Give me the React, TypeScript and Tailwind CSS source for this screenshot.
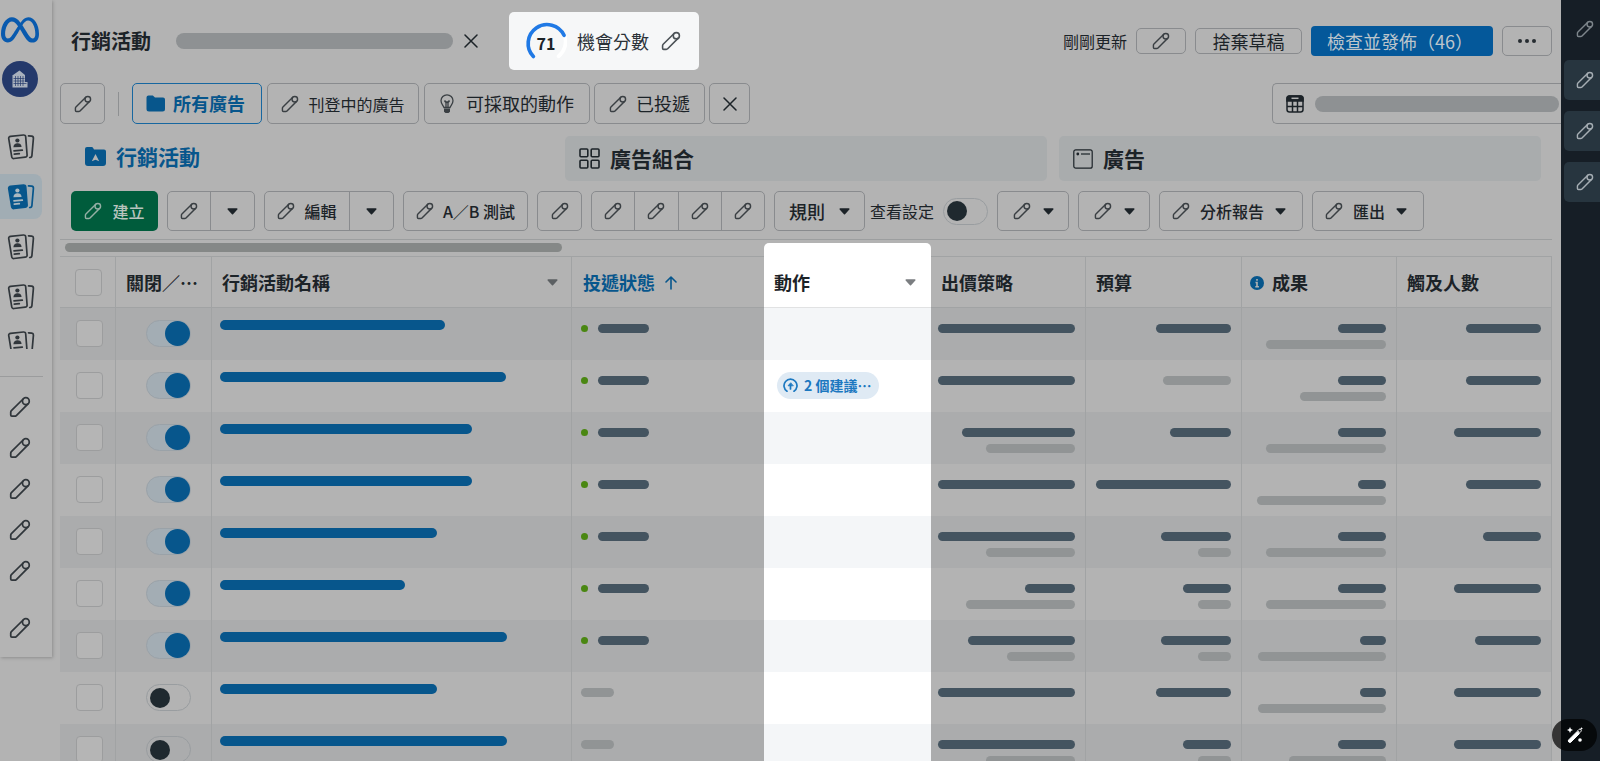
import { useState } from 'react';
import type { ReactNode } from 'react';
import clsx from 'clsx';
import { FaMeta } from 'react-icons/fa6';

type Row = {
    on: boolean;
    name: number;
    status: boolean;
    suggestions?: string;
    bid: number[];
    budget: number[];
    result: number[];
    reach: number[];
};

// Bar widths: [main, secondary]. 0 means that the main bar is missing.
const rows: Row[] = [
    { on: true, name: 225, status: true, bid: [137], budget: [75], result: [48, 120], reach: [75] },
    { on: true, name: 286, status: true, suggestions: '2 個建議⋯', bid: [137], budget: [0, 68], result: [48, 86], reach: [75] },
    { on: true, name: 252, status: true, bid: [113, 89], budget: [61], result: [48, 120], reach: [87] },
    { on: true, name: 252, status: true, bid: [137], budget: [135], result: [28, 129], reach: [75] },
    { on: true, name: 217, status: true, bid: [137, 89], budget: [70, 33], result: [48, 120], reach: [58] },
    { on: true, name: 185, status: true, bid: [50, 109], budget: [48, 33], result: [48, 120], reach: [87] },
    { on: true, name: 287, status: true, bid: [107, 68], budget: [70, 33], result: [26, 128], reach: [66] },
    { on: false, name: 217, status: false, bid: [137], budget: [75], result: [26, 128], reach: [87] },
    { on: false, name: 287, status: false, bid: [137, 89], budget: [48, 33], result: [48, 97], reach: [87] },
];

function Pencil({ className = 'size-[18px] opacity-80' }: { className?: string }) {
    return (
        <svg viewBox="0 0 24 24" fill="none" stroke="currentColor" strokeWidth="1.900" strokeLinejoin="round" className={clsx('shrink-0', className)} aria-hidden="true">
            <path d="M15.700 3L2.600 15.900a2.400 2.400 0 0 0-.7 1.700v3.100a1.300 1.300 0 0 0 1.300 1.300h3.100a2.400 2.400 0 0 0 1.700-.7L21 8.300" />
            <circle cx="18.400" cy="5.600" r="3.700" />
        </svg>
    );
}

function Caret({ className }: { className?: string }) {
    return (
        <svg viewBox="0 0 11 7" className={clsx('h-[7px] w-[11px] shrink-0', className)} aria-hidden="true">
            <path d="M1.200 1h8.600L5.500 5.800z" fill="currentColor" stroke="currentColor" strokeWidth="1.500" strokeLinejoin="round" />
        </svg>
    );
}

function Close() {
    return (
        <svg viewBox="0 0 14 14" className="size-[14px]" fill="none" stroke="currentColor" strokeWidth="1.500" strokeLinecap="round" aria-hidden="true">
            <path d="M1 1l12 12M13 1L1 13" />
        </svg>
    );
}

function Cards({ active, cut }: { active?: boolean; cut?: boolean }) {
    return (
        <svg viewBox={cut ? '0 0 28 18' : '0 0 28 26'} className={cut ? 'h-[18px] w-7' : 'h-[26px] w-7'} fill="none" stroke="currentColor" strokeWidth="1.700" aria-hidden="true">
            <path d="M3.500 2.300l13-1.300a2 2 0 0 1 2.200 1.800l1.400 18.200a2 2 0 0 1-1.900 2.200l-11.200 1.300a2 2 0 0 1-2.300-1.800L1.700 4.500a2 2 0 0 1 1.800-2.200z" fill={active ? 'currentColor' : 'none'} />
            <path d="M21.500 1.800l3.200.4a2 2 0 0 1 1.700 2.200l-1.500 17.200a2.200 2.200 0 0 1-2.200 1.900" strokeLinecap="round" />
            <g className={active ? 'fill-[#aab8c0] stroke-[#aab8c0]' : 'fill-current stroke-current'}>
                <circle cx="10.400" cy="6.500" r="2.100" stroke="none" />
                <path d="M6.400 13.300c0-3 1.900-4 4-4.100s4 .9 4.200 3.800z" stroke="none" />
                <path d="M7 16.900l8.300-.7M7.300 20.100l5-.4" strokeLinecap="round" />
            </g>
        </svg>
    );
}

function Building() {
    return (
        <svg viewBox="0 0 16 18" className="h-[18px] w-4" fill="#a9b1bd" aria-hidden="true">
            <path d="M1 5l6.500-4.500L13 5v7h2.500v5.500H.5V5z" />
            <path d="M3.500 6v10M6 6v10M8.500 6v10M11 6v10M1.500 8.500h11M1.500 11h11M1.500 13.500h13" stroke="#24396b" strokeWidth=".7" />
        </svg>
    );
}

function Button({ children, className, label }: { children: ReactNode; className?: string; label?: string }) {
    return (
        <button type="button" aria-label={label} className={clsx('flex shrink-0 items-center rounded-[5px] border whitespace-nowrap', className)}>
            {children}
        </button>
    );
}

function Toggle({ checked, label }: { checked: boolean; label: string }) {
    const [on, setOn] = useState(checked);
    return (
        <input
            type="checkbox"
            role="switch"
            aria-label={label}
            checked={on}
            onChange={() => setOn(!on)}
            className="flex h-[27px] w-[45px] shrink-0 appearance-none items-center rounded-full border border-[#999da0] px-[3px] before:size-5 before:rounded-full before:bg-[#1f292f] checked:justify-end checked:border-[#9aa2a8] checked:bg-[#a3adb4] checked:px-0 checked:before:size-[25px] checked:before:bg-[#07568c]"
        />
    );
}

function Check({ label }: { label: string }) {
    return <input type="checkbox" aria-label={label} className="block size-[27px] appearance-none rounded border border-[#9c9d9e] bg-[#b5b5b5]" />;
}

function Bars({ widths }: { widths: number[] }) {
    return (
        <div className="flex flex-col items-end gap-[7px] pt-4 pr-[10px]">
            {widths.map((width, i) =>
                width > 0 ? <span key={i} className={clsx('h-[9px] rounded-full', i === 0 ? 'bg-[#445460]' : 'bg-[#919495]')} style={{ width }} /> : null
            )}
        </div>
    );
}

function Sidebar() {
    return (
        <nav aria-label="工具" className="flex w-[52px] shrink-0 flex-col self-start bg-[#b4b4b4] pb-[18px] shadow-[1px_1px_3px_#8e8e8e]">
            <a href="#home" aria-label="Meta" className="mt-[11px] ml-px w-fit text-[#095aae]">
                <FaMeta className="size-[38px]" />
            </a>
            <a href="#business" aria-label="商家" className="mt-3 ml-[2px] flex size-9 items-center justify-center rounded-full bg-[#24396b]">
                <Building />
            </a>
            <div className="mt-[27px] flex flex-col text-[#30363b]">
                {[0, 1, 2, 3, 4].map((i) => (
                    <a
                        key={i}
                        href="#campaigns"
                        aria-label="廣告活動"
                        className={clsx('flex w-[42px] justify-center rounded-r-lg', i === 4 ? 'mt-3 h-[18px]' : 'h-[45px] items-center', i > 0 && i < 4 && 'mt-[5px]', i === 1 && 'bg-[#a1adb4] text-[#07568c]')}
                    >
                        <Cards active={i === 1} cut={i === 4} />
                    </a>
                ))}
            </div>
            <hr className="mt-[27px] w-[43px] border-[#9b9c9d]" />
            <div className="mt-[19px] flex flex-col gap-[19px] pl-[9px] text-[#30363b]">
                {[0, 1, 2, 3, 4].map((i) => (
                    <a key={i} href="#tool" aria-label="編輯工具">
                        <Pencil className="size-[22px]" />
                    </a>
                ))}
                <a href="#more" aria-label="更多工具" className="mt-4">
                    <Pencil className="size-[22px]" />
                </a>
            </div>
        </nav>
    );
}

function Header() {
    return (
        <header className="flex items-center pt-3 pr-[9px] pl-[19px]">
            <h1 className="text-[20px] leading-7 font-bold">行銷活動</h1>
            <span className="ml-[25px] h-4 w-[277px] rounded-full bg-[#8e9193]" />
            <button type="button" aria-label="關閉" className="ml-[11px]">
                <Close />
            </button>
            <div className="ml-[31px] flex h-[58px] w-[190px] items-center rounded-[5px] bg-[#f6f7f8] pl-4">
                <div className="relative flex size-[42px] items-center justify-center text-[16px] font-bold">
                    <svg viewBox="0 0 40 40" className="absolute inset-0 size-[42px]" fill="none" strokeWidth="3.500" strokeLinecap="round" aria-hidden="true">
                        <path d="M37.900 15.500A18 18 0 0 1 32 34.500" stroke="#fff" />
                        <path d="M8 34.800A18 18 0 1 1 37.200 14.500" stroke="#2079e5" />
                    </svg>
                    <span className="pt-1">71</span>
                </div>
                <span className="ml-[10px] text-[18px] text-[#2b3238]">機會分數</span>
                <Pencil className="ml-3 size-5 text-[#4b5156]" />
            </div>
            <div className="ml-auto flex items-center gap-[9px]">
                <span className="text-[16px]">剛剛更新</span>
                <Button className="h-[26px] w-[50px] justify-center border-[#898b8e]" label="編輯">
                    <Pencil />
                </Button>
                <Button className="h-[26px] w-[107px] justify-center border-[#898b8e] text-[18px]">捨棄草稿</Button>
                <button type="button" className="flex h-[30px] w-[182px] items-center rounded bg-[#04589a] pl-4 text-[18px] whitespace-nowrap text-[#bcc5cc]">
                    檢查並發佈（46）
                </button>
                <Button className="h-[30px] w-[50px] justify-center gap-[3px] border-[#898b8e]" label="更多">
                    <i className="size-1 rounded-full bg-[#262c31]" />
                    <i className="size-1 rounded-full bg-[#262c31]" />
                    <i className="size-1 rounded-full bg-[#262c31]" />
                </Button>
            </div>
        </header>
    );
}

function Filters() {
    return (
        <div className="mt-[13px] flex h-[41px] items-stretch pl-2">
            <Button className="w-[45px] justify-center border-[#898b8e]" label="編輯篩選條件">
                <Pencil />
            </Button>
            <span className="mx-[13px] w-px self-center bg-[#8e9092] py-3" />
            <Button className="w-[130px] gap-[7px] border-[#1767a0] pl-[13px] text-[18px] font-bold text-[#07568c]">
                <svg viewBox="0 0 20 17" className="h-[17px] w-5" fill="currentColor" aria-hidden="true">
                    <path d="M.5 2.500A2 2 0 0 1 2.500.5h4.300l2.200 2H17a2 2 0 0 1 2 2V14a2.500 2.500 0 0 1-2.500 2.500H3A2.500 2.500 0 0 1 .5 14z" />
                </svg>
                所有廣告
            </Button>
            <Button className="ml-[5px] w-[152px] justify-center gap-[9px] border-[#898b8e] text-[16px]">
                <Pencil />
                刊登中的廣告
            </Button>
            <Button className="ml-[5px] w-[166px] justify-center gap-3 border-[#898b8e] text-[18px]">
                <svg viewBox="0 0 14 20" className="h-5 w-3.5 opacity-80" fill="none" stroke="currentColor" strokeWidth="1.300" aria-hidden="true">
                    <path d="M4 13.500C3.500 11.500 1 10 1 6.800a6 6 0 0 1 12 0c0 3.200-2.500 4.700-3 6.700zM4.500 7l1.500 1.500v5M9.500 7L8 8.500v5M4.500 6.500l2.500 2 2.500-2" />
                    <path d="M4 14.500h6v3.200L8.500 19h-3L4 17.700z" fill="currentColor" stroke="none" />
                </svg>
                可採取的動作
            </Button>
            <Button className="ml-1 w-[111px] justify-center gap-[9px] border-[#898b8e] text-[18px]">
                <Pencil />
                已投遞
            </Button>
            <Button className="ml-1 w-[41px] justify-center border-[#898b8e]" label="清除篩選條件">
                <Close />
            </Button>
            <button type="button" aria-label="日期範圍" className="ml-auto flex w-[289px] items-center rounded-l-[5px] border border-r-0 border-[#898b8e] pl-[13px]">
                <svg viewBox="0 0 18 18" className="size-[18px]" fill="none" stroke="currentColor" strokeWidth="1.500" aria-hidden="true">
                    <rect x="1" y="1" width="16" height="16" rx="2.500" />
                    <path d="M1 3.500A2.500 2.500 0 0 1 3.500 1h11A2.500 2.500 0 0 1 17 3.500V6H1z" fill="currentColor" />
                    <path d="M1 11.500h16M6.500 6v11M11.500 6v11" />
                    <path d="M5.500 3.300h7" stroke="#b3b3b3" />
                </svg>
                <span className="ml-[11px] h-4 w-[244px] rounded-full bg-[#8e9193]" />
            </button>
        </div>
    );
}

function Tabs() {
    const tab = 'flex h-[45px] items-center gap-[10px] rounded-[5px] pl-3.5 text-[21px] font-bold';
    return (
        <div role="tablist" className="mt-3 mr-5 ml-[19px] grid grid-cols-3 gap-3">
            <button type="button" role="tab" aria-selected="true" className={clsx(tab, 'pb-1 text-[#07568c]')}>
                <svg viewBox="0 0 21 19" className="h-[19px] w-[21px]" fill="currentColor" aria-hidden="true">
                    <path d="M0 2a2 2 0 0 1 2-2h4.500a2 2 0 0 1 1.800 1.200L9 2.500h10a2 2 0 0 1 2 2V16a3 3 0 0 1-3 3H3a3 3 0 0 1-3-3z" />
                    <path d="M10.500 7l3.700 7.200-3.700-1.500-3.700 1.500z" fill="#b3b3b3" />
                </svg>
                行銷活動
            </button>
            <button type="button" role="tab" aria-selected="false" className={clsx(tab, 'bg-[#a9acad]')}>
                <svg viewBox="0 0 21 21" className="size-[21px]" fill="none" stroke="currentColor" strokeWidth="1.600" aria-hidden="true">
                    <rect x="1" y="1" width="7.800" height="7.800" rx="1" />
                    <rect x="12.200" y="1" width="7.800" height="7.800" rx="1" />
                    <rect x="1" y="12.200" width="7.800" height="7.800" rx="1" />
                    <rect x="12.200" y="12.200" width="7.800" height="7.800" rx="1" />
                </svg>
                廣告組合
            </button>
            <button type="button" role="tab" aria-selected="false" className={clsx(tab, 'bg-[#a9acad]')}>
                <svg viewBox="0 0 20 20" className="size-5" fill="none" stroke="currentColor" strokeWidth="1.200" aria-hidden="true">
                    <rect x=".8" y=".8" width="18.400" height="18.400" rx="2" />
                    <path d="M8 5h9" />
                    <circle cx="4.800" cy="5" r="1.400" fill="currentColor" stroke="none" />
                </svg>
                廣告
            </button>
        </div>
    );
}

function Toolbar() {
    const group = 'flex shrink-0 divide-x divide-[#898b8e] rounded-[5px] border border-[#898b8e]';
    const part = 'flex w-[43px] items-center justify-center';
    const button = 'justify-center border-[#898b8e]';
    const menu = 'gap-[10px] border-[#898b8e] pl-3';
    return (
        <div className="mt-[10px] flex h-10 items-stretch gap-[9px] pl-[19px] text-[16px] font-medium">
            <button type="button" className="flex w-[87px] shrink-0 items-center justify-center gap-[10px] rounded-[5px] bg-[#005c3c] text-[#b9c4bf]">
                <Pencil />
                建立
            </button>
            <div className={group}>
                <button type="button" aria-label="複製" className={part}>
                    <Pencil />
                </button>
                <button type="button" aria-label="複製選項" className={part}>
                    <Caret />
                </button>
            </div>
            <div className={group}>
                <button type="button" className="flex w-[85px] items-center justify-center gap-[9px]">
                    <Pencil />
                    編輯
                </button>
                <button type="button" aria-label="編輯選項" className={part}>
                    <Caret />
                </button>
            </div>
            <Button className={clsx(button, 'w-[125px] gap-[9px]')}>
                <Pencil />
                A／B 測試
            </Button>
            <Button className={clsx(button, 'w-[45px]')} label="刪除">
                <Pencil />
            </Button>
            <div className={group}>
                {['復原', '重做', '匯入', '標籤'].map((label) => (
                    <button key={label} type="button" aria-label={label} className={clsx(part, 'flex-1')}>
                        <Pencil />
                    </button>
                ))}
            </div>
            <Button className={clsx(button, 'w-[91px] gap-3.5 text-[18px]')}>
                規則
                <Caret />
            </Button>
            <label className="-ml-1 flex items-center gap-[9px] font-normal whitespace-nowrap">
                查看設定
                <Toggle checked={false} label="查看設定" />
            </label>
            <Button className={clsx(button, 'w-[72px] gap-3')} label="欄位">
                <Pencil />
                <Caret />
            </Button>
            <Button className={clsx(button, 'w-[72px] gap-3')} label="分析細目">
                <Pencil />
                <Caret />
            </Button>
            <Button className={clsx(menu, 'w-[144px]')}>
                <Pencil />
                分析報告
                <Caret className="mr-4 ml-auto" />
            </Button>
            <Button className={clsx(menu, 'w-[112px]')}>
                <Pencil />
                匯出
                <Caret className="mr-4 ml-auto" />
            </Button>
        </div>
    );
}

const line = 'border-[#a1a3a4]';

function Th({ children, className }: { children: ReactNode; className?: string }) {
    return (
        <th scope="col" className={clsx('h-[52px] border-y p-0 text-left font-bold', className)}>
            <div className="flex items-center pt-px whitespace-nowrap">{children}</div>
        </th>
    );
}

function CampaignTable() {
    const head = clsx(line, 'border-r');
    return (
        <table className="w-full table-fixed border-separate border-spacing-0 text-[18px]">
            <colgroup>
                <col className="w-[56px]" />
                <col className="w-[96px]" />
                <col />
                <col className="w-[192px]" />
                <col className="w-[167px]" />
                <col className="w-[155px]" />
                <col className="w-[156px]" />
                <col className="w-[155px]" />
                <col className="w-[155px]" />
            </colgroup>
            <thead>
                <tr>
                    <Th className={clsx(head, 'pl-[15px]')}>
                        <Check label="全選" />
                    </Th>
                    <Th className={clsx(head, 'pl-[10px]')}>關閉／⋯</Th>
                    <Th className={clsx(head, 'pl-[10px]')}>
                        行銷活動名稱
                        <Caret className="mr-[13px] ml-auto text-[#5c6063]" />
                    </Th>
                    <Th className={clsx(line, 'pl-[11px] text-[#07568c]')}>
                        投遞狀態
                        <svg viewBox="0 0 12 14" className="ml-[10px] h-3.5 w-3" fill="none" stroke="currentColor" strokeWidth="1.600" strokeLinecap="round" strokeLinejoin="round" aria-hidden="true">
                            <path d="M6 13V1M1 6l5-5 5 5" />
                        </svg>
                    </Th>
                    <Th className="relative border-[#e1e2e3] bg-white pl-[10px] before:absolute before:inset-x-0 before:bottom-full before:h-[14px] before:rounded-t-[5px] before:bg-white">
                        動作
                        <Caret className="mr-[15px] ml-auto text-[#7b7e81]" />
                    </Th>
                    <Th className={clsx(head, 'pl-[10px]')}>出價策略</Th>
                    <Th className={clsx(head, 'pl-[10px]')}>預算</Th>
                    <Th className={clsx(head, 'pl-2')}>
                        <svg viewBox="0 0 14 14" className="mr-2 size-3.5" aria-hidden="true">
                            <circle cx="7" cy="7" r="7" fill="#07568c" />
                            <path d="M7 3v1.800M5.500 6.500H7v4M5.300 10.700h3.600" stroke="#b3b3b3" strokeWidth="1.600" fill="none" />
                        </svg>
                        成果
                    </Th>
                    <Th className={clsx(head, 'pl-[10px]')}>觸及人數</Th>
                </tr>
            </thead>
            <tbody>
                {rows.map((row, i) => {
                    const cell = clsx('h-[52px] p-0 align-top', line);
                    return (
                        <tr key={i} className={i % 2 === 0 ? 'bg-[#abacad]' : 'bg-[#b3b3b3]'}>
                            <td className={clsx(cell, 'border-r pt-3 pl-4')}>
                                <Check label={`選取行銷活動 ${i + 1}`} />
                            </td>
                            <td className={clsx(cell, 'border-r pt-3 pl-[30px]')}>
                                <Toggle checked={row.on} label={`開關行銷活動 ${i + 1}`} />
                            </td>
                            <td className={clsx(cell, 'border-r pt-3 pl-2')}>
                                <div className="h-[10px] rounded-full bg-[#07568c]" style={{ width: row.name }} />
                            </td>
                            <td className={clsx(cell, 'pt-4 pl-[9px]')}>
                                {row.status ? (
                                    <div className="flex items-center gap-[10px]">
                                        <span className="size-[7px] rounded-full bg-[#4a8712]" />
                                        <span className="h-[9px] w-[51px] rounded-full bg-[#445460]" />
                                    </div>
                                ) : (
                                    <div className="h-[9px] w-[33px] rounded-full bg-[#919495]" />
                                )}
                            </td>
                            <td className={clsx(cell, 'pl-[13px]', i % 2 === 0 ? 'bg-[#f4f6f8]' : 'bg-white')}>
                                {row.suggestions && (
                                    <button type="button" className="mt-3 flex h-[27px] w-[102px] items-center gap-[6px] rounded-full bg-[#dfeaf4] pl-[6px] text-[14px] font-bold whitespace-nowrap text-[#1c78c0]">
                                        <svg viewBox="0 0 15 15" className="size-[15px]" fill="none" stroke="currentColor" strokeWidth="1.700" strokeLinecap="round" aria-hidden="true">
                                            <path d="M4 13.200a6.500 6.500 0 1 1 7 0" />
                                            <path d="M7.500 11V7" />
                                            <path d="M7.500 5L5 7.800h5z" fill="currentColor" strokeWidth=".8" />
                                        </svg>
                                        {row.suggestions}
                                    </button>
                                )}
                            </td>
                            {[row.bid, row.budget, row.result, row.reach].map((widths, j) => (
                                <td key={j} className={clsx(cell, 'border-r')}>
                                    <Bars widths={widths} />
                                </td>
                            ))}
                        </tr>
                    );
                })}
            </tbody>
        </table>
    );
}

function RightRail() {
    return (
        <aside className="flex w-[39px] shrink-0 flex-col items-end gap-[11px] bg-[#161e26] pt-[9px] text-[#a5adb3]">
            {['編輯', '圖表', '紀錄', '說明'].map((label, i) => (
                <button
                    key={label}
                    type="button"
                    aria-label={label}
                    className={clsx('flex h-10 w-9 items-center justify-center rounded-l-[5px] pl-[6px]', i === 0 ? 'text-[#7d858b]' : 'bg-[#27353f]')}
                >
                    <Pencil className="size-[18px]" />
                </button>
            ))}
        </aside>
    );
}

function App() {
    return (
        <div lang="zh-Hant" className="relative flex h-screen overflow-hidden bg-[#b3b3b3] font-['Noto_Sans_CJK_TC',sans-serif] text-[#1c2328]">
            <Sidebar />
            <main className="min-w-0 flex-1">
                <Header />
                <Filters />
                <Tabs />
                <Toolbar />
                <div className="mt-2 mr-[9px] ml-2 border-t border-[#9c9e9f]">
                    <div className="mt-[3px] mb-1 ml-[5px] h-[9px] w-1/3 rounded-full bg-[#858887]" />
                    <CampaignTable />
                </div>
            </main>
            <RightRail />

            {/* Magic edit button */}
            <button type="button" aria-label="智慧編輯" className="absolute right-[3px] bottom-[10px] flex h-8 w-[45px] items-center justify-center rounded-full bg-black/70 text-white">
                <svg viewBox="0 0 16 16" className="size-4" fill="currentColor" aria-hidden="true">
                    <path d="M1.800 12.800l8.400-8.400 2.200 2.200L4 15a1.550 1.550 0 0 1-2.200-2.200z" stroke="currentColor" />
                    <path d="M10.800 3.600l1-1a1.300 1.300 0 0 1 2 2l-1 1z" fill="none" stroke="currentColor" />
                    <path d="M3 0l.9 2.100L6 3l-2.100.9L3 6l-.9-2.100L0 3l2.100-.9zM14.500 0l.4 1.100 1.100.4-1.100.4-.4 1.100-.4-1.100-1.100-.4 1.100-.4z" />
                    <circle cx="13" cy="13" r="1.800" />
                </svg>
            </button>
        </div>
    );
}

export default App;
